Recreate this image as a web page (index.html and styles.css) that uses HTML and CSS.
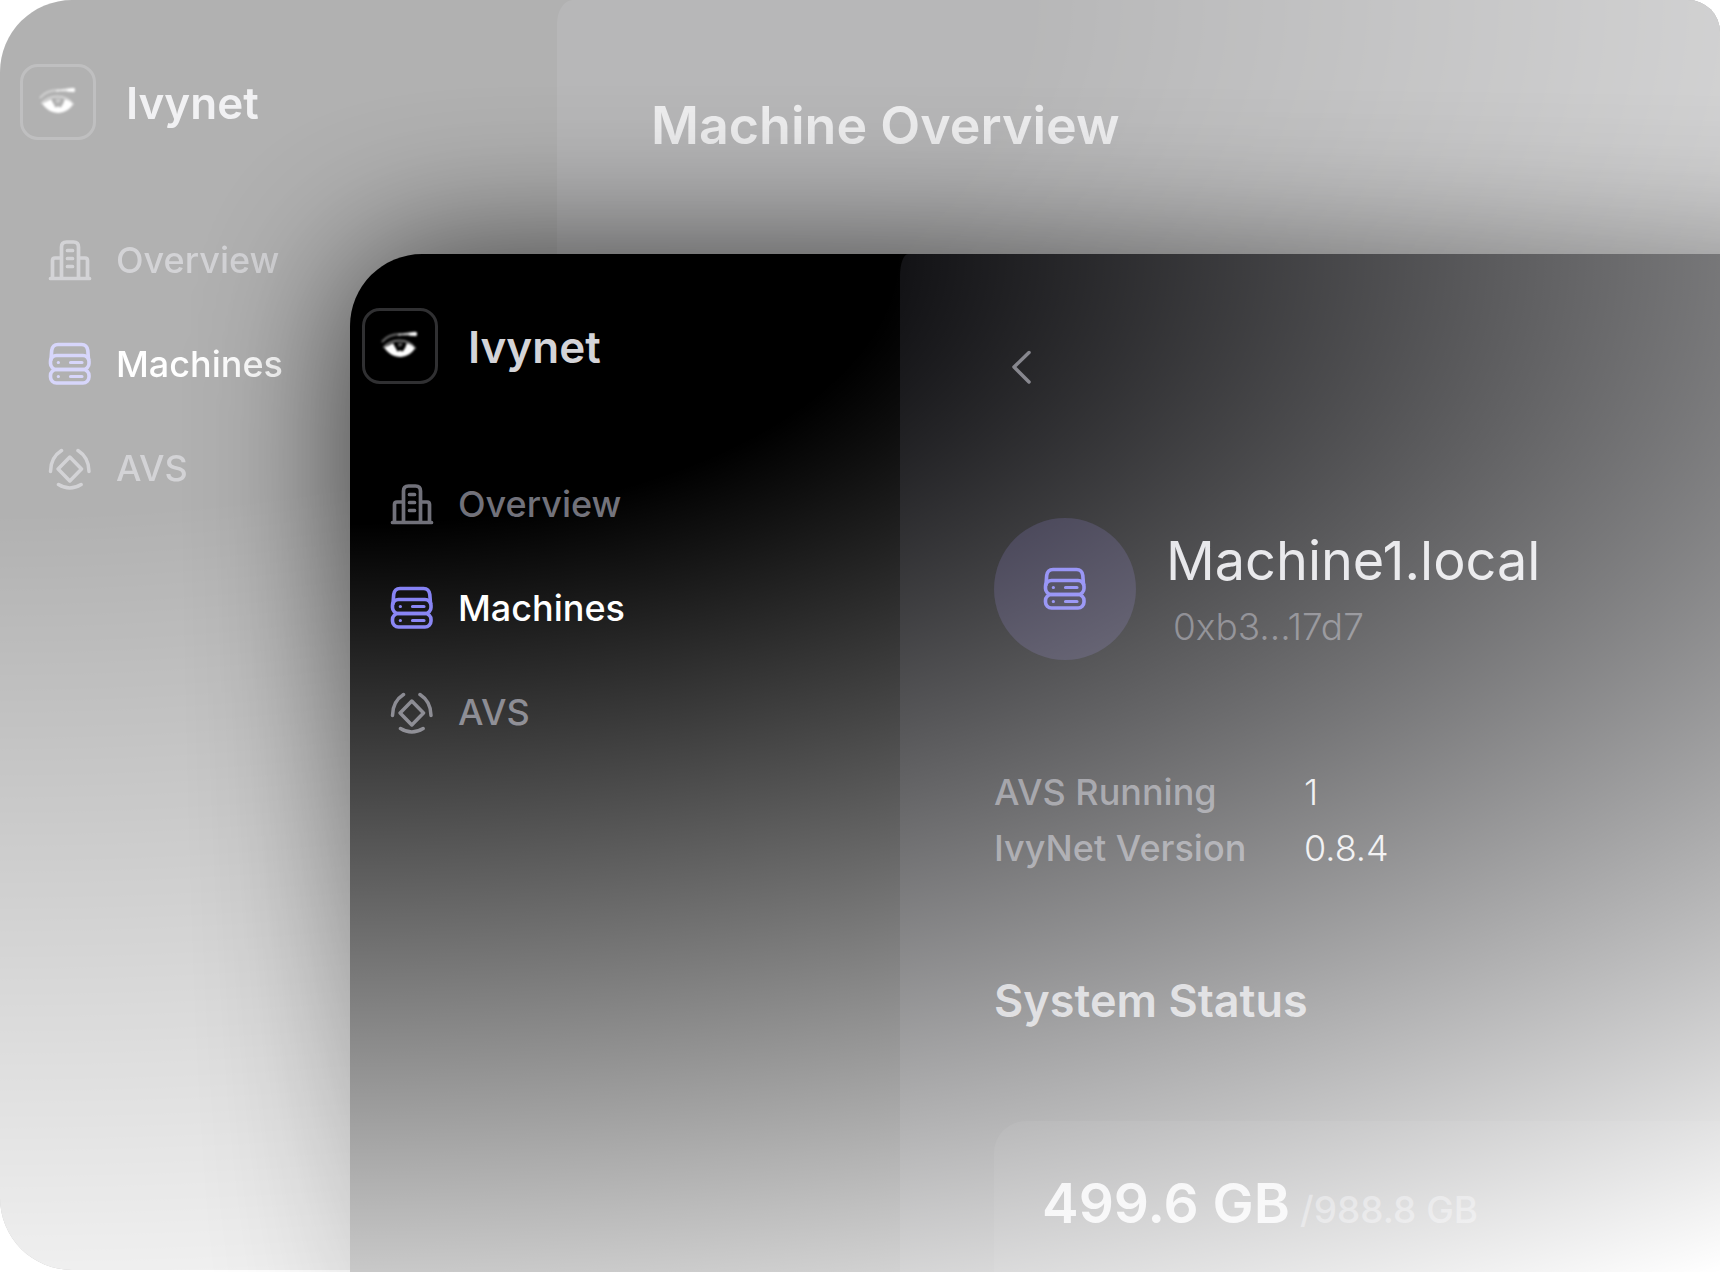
FILE: index.html
```html
<!DOCTYPE html>
<html lang="en">
<head>
<meta charset="utf-8">
<meta name="viewport" content="width=device-width, initial-scale=1">
<title>Ivynet</title>
<link rel="stylesheet" href="styles.css">
</head>
<body>
<svg class="sprite" aria-hidden="true">
  <symbol id="eye" viewBox="0 0 76 76">
    <path d="M19 33c4-5 11-8 19-8" fill="none" stroke="#666" stroke-width="2.500" stroke-linecap="round"/>
    <path d="M36 25l18-2.500c3 0 3 4 1 5-5-1-12-1.500-19-.5z" fill="#ccc"/>
    <path d="M48 24l7-1c2 0 2 3 0 4-3 0-5-.5-7-.5z" fill="#fff"/>
    <path d="M20 40c4-5 9-8 17-8s14 3 18 9" fill="none" stroke="#777" stroke-width="2"/>
    <path d="M21 40c3-2 7-4 10-5 0 3 3 5 4 9l3-1 3 1c2-3 4-6 4-9 4 1 8 3 9 6-3 5-8 8-15 9-8 0-14-4-18-10z" fill="#fff"/>
    <path d="M36 33c1 2 3 2 5 1l-1 4-4 1z" fill="#555"/>
  </symbol>
  <symbol id="building" viewBox="0 0 44 44">
    <g fill="none" stroke="currentColor" stroke-width="3.700" stroke-linecap="round" stroke-linejoin="round">
      <path d="M2.500 40.500h39M13.500 40.500V9q0-5 5-5h7q5 0 5 5v31.500M4.500 40.500V22.500q0-2.500 2.500-2.500h6.500M30.500 20H37q2.500 0 2.500 2.500v18M19.500 12.500h5M19.500 20.500h5M19.500 28.500h5"/>
    </g>
  </symbol>
  <symbol id="server" viewBox="0 0 44 44">
    <g fill="none" stroke="currentColor" stroke-width="3.600" stroke-linecap="round" stroke-linejoin="round">
      <rect x="2.500" y="13.500" width="38.500" height="14" rx="6"/>
      <rect x="2.500" y="27.500" width="38.500" height="13.500" rx="6"/>
      <path d="M3 17.500l.7-9Q4.500 2.500 10 2.500h23.500q5.500 0 6.300 6l.7 9"/>
      <path d="M22.500 20.500h11.500M22.500 34.500h11.500M10.300 20.500h.1M10.300 34.500h.1" stroke-width="3.200"/>
    </g>
  </symbol>
  <symbol id="avs" viewBox="0 0 44 44">
    <g fill="none" stroke="currentColor" stroke-width="3.500" stroke-linecap="round" stroke-linejoin="round">
      <path d="M21.800 11l11.700 12-11.700 12-11.700-12zM13.500 4.500Q2.500 11.500 2.500 25.500M30 4.500Q41 11.500 41 25.500M10.500 38.500q11.300 7 22.600 0"/>
    </g>
  </symbol>
</svg>

<main class="stage">
  <section class="window window-back" aria-label="Machine list">
    <aside class="sidebar">
      <div class="brand">
        <span class="logo"><svg><use href="#eye"/></svg></span>
        <span class="brand-name">Ivynet</span>
      </div>
      <nav class="nav">
        <a href="#overview"><svg class="icon"><use href="#building"/></svg>Overview</a>
        <a href="#machines" class="active"><svg class="icon"><use href="#server"/></svg>Machines</a>
        <a href="#avs"><svg class="icon"><use href="#avs"/></svg>AVS</a>
      </nav>
    </aside>
    <div class="content">
      <h1 class="page-title">Machine Overview</h1>
    </div>
  </section>

  <div class="shade" aria-hidden="true"></div>

  <section class="window window-front" aria-label="Machine details">
    <aside class="sidebar">
      <div class="brand">
        <span class="logo"><svg><use href="#eye"/></svg></span>
        <span class="brand-name">Ivynet</span>
      </div>
      <nav class="nav">
        <a href="#overview"><svg class="icon"><use href="#building"/></svg>Overview</a>
        <a href="#machines" class="active"><svg class="icon"><use href="#server"/></svg>Machines</a>
        <a href="#avs"><svg class="icon"><use href="#avs"/></svg>AVS</a>
      </nav>
    </aside>
    <div class="content">
      <button class="back" type="button" aria-label="Back">
        <svg width="24" height="36" viewBox="0 0 24 36"><path d="M20 3.500L5 18l15 15" fill="none" stroke="currentColor" stroke-width="3.500" stroke-linecap="round" stroke-linejoin="round"/></svg>
      </button>
      <header class="machine">
        <span class="avatar"><svg class="icon"><use href="#server"/></svg></span>
        <div class="machine-text">
          <h2 class="machine-name">Machine1.local</h2>
          <p class="machine-id">0xb3...17d7</p>
        </div>
      </header>
      <table class="facts">
        <tr><th scope="row">AVS Running</th><td>1</td></tr>
        <tr><th scope="row">IvyNet Version</th><td>0.8.4</td></tr>
      </table>
      <h3 class="section-title">System Status</h3>
      <div class="card">
        <p class="usage"><strong>499.6 GB</strong><span>/988.8 GB</span></p>
      </div>
    </div>
  </section>
</main>
</body>
</html>
```
FILE: styles.css
```css
* { box-sizing: border-box; }

body {
  margin: 0;
  background: #fff;
  font-family: Inter, "Liberation Sans", sans-serif;
}

h1, h2, h3, p { margin: 0; }

.sprite { position: absolute; width: 0; height: 0; }

/* The two windows and the shade share one grid cell */
.stage {
  display: grid;
  min-height: 100vh;
  overflow: hidden;
}

.stage > * { grid-area: 1 / 1; }

.window {
  position: relative;
  display: flex;
  overflow: hidden;
  background: #000;
}

/* Fade to white away from the top left corner */
.window::after {
  content: "";
  position: absolute;
  inset: 0;
  pointer-events: none;
}

.window-back {
  margin-bottom: 2px;
  border-radius: 72px 32px 0 72px;
  opacity: 0.3;
}

.window-back::after {
  background: radial-gradient(2956px 1456px at 0 0, rgba(255, 255, 255, 0) 35%, #fff 100%);
}

.window-front {
  margin: 254px 0 0 350px;
  border-radius: 72px 0 0 0;
}

.window-front::after {
  background: radial-gradient(2480px 1222px at 0 0, rgba(255, 255, 255, 0) 22%, #fff 100%);
}

.shade {
  margin: 254px -200px -200px 350px;
  border-radius: 72px 0 0 0;
  background: radial-gradient(2480px 1222px at 0 0, #000 22%, rgba(0, 0, 0, 0) 100%);
  filter: blur(76px);
  opacity: 0.68;
}

.sidebar {
  flex: none;
  width: 550px;
  padding: 54px 0 0 12px;
}

.window-back .sidebar {
  width: 557px;
  padding: 64px 0 0 20px;
}

.brand {
  display: flex;
  align-items: center;
  gap: 30px;
}

.logo {
  width: 76px;
  height: 76px;
  border: 3px solid #303032;
  border-radius: 18px;
}

.logo svg { display: block; width: 70px; height: 70px; filter: blur(1px); }

.brand-name {
  padding-top: 2px;
  color: #d4d4d8;
  font-size: 44px;
  font-weight: 600;
  line-height: 56px;
}

.nav {
  display: flex;
  flex-direction: column;
  gap: 60px;
  padding: 98px 0 0 28px;
}

.nav a {
  display: flex;
  align-items: center;
  gap: 24px;
  color: #71717a;
  font-size: 36px;
  font-weight: 500;
  line-height: 44px;
  text-decoration: none;
}

.nav a.active { color: #fff; }

.icon { display: block; width: 44px; height: 44px; }

.active .icon, .avatar .icon { color: #7d79f3; }

.content {
  flex: 1;
  display: flex;
  flex-direction: column;
  min-width: 0;
  padding: 89px 0 0 94px;
  border-top-left-radius: 8px 22px;
  background: #121215;
}

.window-back .content {
  padding-top: 90px;
  border-top-left-radius: 16px 24px;
  background: #151518;
}

.page-title {
  color: #c8c8cc;
  font-size: 52px;
  font-weight: 600;
  line-height: 72px;
}

.back {
  display: flex;
  align-items: center;
  justify-content: center;
  width: 54px;
  height: 48px;
  padding: 0;
  border: 0;
  background: none;
  color: #7c7c84;
}

.machine {
  display: flex;
  align-items: center;
  gap: 30px;
  margin-top: 127px;
}

.avatar {
  display: grid;
  place-items: center;
  width: 142px;
  height: 142px;
  border-radius: 50%;
  background: #28253b;
}

.machine-text {
  display: grid;
  gap: 12px;
}

.machine-name {
  color: #e0e0e4;
  font-size: 54px;
  font-weight: 400;
  line-height: 64px;
}

.machine-id {
  padding-left: 7px;
  color: #63636b;
  font-size: 37px;
  font-weight: 300;
  line-height: 44px;
}

.facts {
  align-self: flex-start;
  margin-top: 104px;
  border-collapse: collapse;
  font-size: 36px;
  line-height: 56px;
}

.facts th {
  width: 310px;
  padding: 0;
  color: #71717a;
  font-weight: 500;
  text-align: left;
}

.facts td {
  padding: 0;
  color: #e4e4e7;
  font-weight: 300;
}

.section-title {
  margin-top: 97px;
  color: #b4b4ba;
  font-size: 45px;
  font-weight: 600;
  line-height: 56px;
}

.card {
  flex: 1;
  margin-top: 92px;
  padding: 50px 0 0 48px;
  border-top-left-radius: 32px;
  background: #1f1f22;
}

.usage {
  display: flex;
  align-items: baseline;
  gap: 10px;
  color: #71717a;
  font-size: 37px;
  font-weight: 500;
  line-height: 64px;
}

.usage strong {
  color: #dcdce0;
  font-size: 55px;
  font-weight: 600;
}
```
